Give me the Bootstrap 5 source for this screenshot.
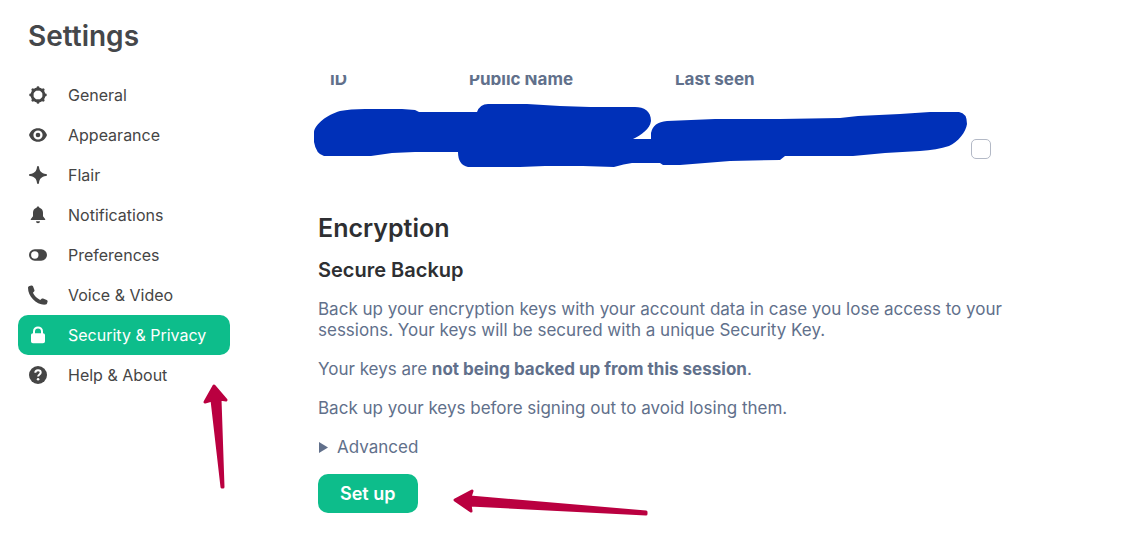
<!DOCTYPE html>
<html lang="en">
<head>
<meta charset="utf-8">
<meta name="viewport" content="width=device-width, initial-scale=1">
<title>Settings</title>
<link href="https://cdn.jsdelivr.net/npm/bootstrap@5.3.0/dist/css/bootstrap.min.css" rel="stylesheet">
<style>
body { font-family: Inter, "Liberation Sans", sans-serif; color: #61708b; font-size: 17px; line-height: 21px; background: #fff; }
h1 { font-size: 28px; line-height: 36px; font-weight: 600; color: #45474a; height: 75px; padding: 18px 0 0 10px; }
h2 { font-size: 25px; line-height: 32px; font-weight: 600; color: #2e2f32; margin: 5px 0 14px; }
h3 { font-size: 20px; line-height: 24px; font-weight: 600; color: #2e2f32; margin: 0 0 17px; }
.side { width: 230px; padding-left: 18px; }
.side .nav-link { height: 40px; padding: 0 10px; gap: 20px; border-radius: 10px; font-size: 16px; color: #454545; }
.side .nav-link.active { background: #0dbd8b; color: #fff; }
.side .ico { width: 20px; height: 20px; fill: currentColor; }
.pane { padding: 75px 20px 0 80px; }
.scroller { max-width: 748px; padding-left: 8px; }
.sessions { margin-top: -8px; width: 680px; table-layout: fixed; }
.sessions th { padding: 0 0 0 12px; font-size: 17px; font-weight: 700; height: 24px; }
.sessions td { height: 116px; padding: 0; }
.sessions .c-id { width: 139px; }
.sessions .c-name { width: 206px; }
.sessions .c-seen { width: 308px; }
.sessions .form-check-input { width: 20px; height: 20px; margin: 0; border: 1px solid #b3b9c6; border-radius: 5px; }
.redaction { left: -8px; top: 33px; width: 660px; height: 70px; fill: #0030b8; }
.arrow { fill: #ba0040; stroke: #ba0040; stroke-width: 3; stroke-linejoin: round; pointer-events: none; }
.arrow-up { left: 180px; top: 305px; width: 40px; height: 110px; }
.arrow-left { left: 132px; top: 10px; width: 200px; height: 34px; }
.copy p { margin-bottom: 18px; }
details { margin-bottom: 16px; }
summary { list-style: none; gap: 9px; }
summary svg { width: 10px; height: 12px; fill: #61708b; }
.btn-setup { background: #0dbd8b; color: #fff; font-size: 18px; font-weight: 600; line-height: 21px; padding: 9px 22px; border: 0; border-radius: 10px; }
.btn-setup:hover { background: #0ba87b; color: #fff; }
</style>
</head>
<body>
<div class="d-flex min-vh-100">
  <aside class="side flex-shrink-0">
    <h1 class="m-0">Settings</h1>
    <nav class="nav flex-column position-relative">
      <a class="nav-link d-flex align-items-center" href="#general"><svg class="ico" viewBox="0 0 20 20"><circle cx="10" cy="10" r="6" fill="none" stroke="currentColor" stroke-width="2.800"/><path d="M10 2.600V4M10 16v1.400M2.600 10H4M16 10h1.400M4.800 4.800l1 1M14.200 14.200l1 1M15.200 4.800l-1 1M5.800 14.200l-1 1" fill="none" stroke="currentColor" stroke-width="2.800" stroke-linecap="round"/></svg>General</a>
      <a class="nav-link d-flex align-items-center" href="#appearance"><svg class="ico" viewBox="0 0 20 20"><path fill-rule="evenodd" d="M10 3.200c4.300 0 7.500 2.700 9 6.800-1.500 4.100-4.700 6.800-9 6.800S2.500 14.100 1 10c1.500-4.100 4.700-6.800 9-6.800ZM10 5.400a4.600 4.600 0 1 0 0 9.200 4.600 4.600 0 0 0 0-9.200Z"/><circle cx="10" cy="10" r="2.300"/></svg>Appearance</a>
      <a class="nav-link d-flex align-items-center" href="#flair"><svg class="ico" viewBox="0 0 20 20"><path d="M10 1c.6 0 .9.400 1 1 .5 4.300 2.300 6.300 7 7 .7.100 1 .5 1 1s-.3.900-1 1c-4.700.7-6.500 2.700-7 7-.1.600-.4 1-1 1s-.9-.4-1-1c-.5-4.300-2.300-6.300-7-7-.7-.1-1-.5-1-1s.3-.9 1-1c4.700-.7 6.500-2.700 7-7 .1-.6.400-1 1-1Z"/></svg>Flair</a>
      <a class="nav-link d-flex align-items-center" href="#notifications"><svg class="ico" viewBox="0 0 20 20"><path d="M10 1.500c.8 0 1.300.5 1.400 1.300 2.300.6 3.600 2.400 3.600 5v3.500l2.100 2.600c.4.500.2 1.100-.5 1.100H3.400c-.7 0-.9-.6-.5-1.100L5 11.300V7.800c0-2.600 1.300-4.400 3.600-5 .1-.8.6-1.300 1.400-1.300ZM8 16.200h4a2 2 0 0 1-4 0Z"/></svg>Notifications</a>
      <a class="nav-link d-flex align-items-center" href="#preferences"><svg class="ico" viewBox="0 0 20 20"><path fill-rule="evenodd" d="M6.800 4.200h6.400a5.800 5.800 0 0 1 0 11.600H6.800a5.800 5.800 0 0 1 0-11.600Zm0 2.100a3.700 3.700 0 1 0 0 7.400 3.700 3.700 0 0 0 0-7.400Z"/></svg>Preferences</a>
      <a class="nav-link d-flex align-items-center" href="#voice"><svg class="ico" viewBox="0 0 20 20"><path d="M1.500.9 3.300.4c.8-.1 1.400.2 1.700.9l1.400 3.600c.2.600.1 1.100-.3 1.500L4.900 7.800c1.600 3.200 4 5.600 7.300 7.200l1.400-1.200c.4-.4.900-.5 1.500-.3l3.600 1.400c.7.300 1 .9.900 1.700l-.5 1.600c-.2.900-.9 1.400-1.800 1.400C8.400 20.200 0 11.500 0 2.800c0-1 .6-1.700 1.500-1.900Z"/></svg>Voice &amp; Video</a>
      <a class="nav-link active d-flex align-items-center" href="#security" aria-current="page"><svg class="ico" viewBox="0 0 20 20"><path fill-rule="evenodd" d="M5 8.200V6.400a5 5 0 0 1 10 0v1.800c1.200 0 2 .8 2 2v6c0 1.200-.8 2-2 2H5c-1.200 0-2-.8-2-2v-6c0-1.200.8-2 2-2Zm2 0h6V6.400a3 3 0 0 0-6 0Z"/></svg>Security &amp; Privacy</a>
      <a class="nav-link d-flex align-items-center" href="#help"><svg class="ico" viewBox="0 0 20 20"><circle cx="10" cy="10" r="9"/><path d="M7.300 7.800C7.300 6.200 8.400 5.300 10 5.300s2.700.9 2.700 2.300c0 1.900-2.600 1.900-2.600 4" fill="none" stroke="#fff" stroke-width="2"/><circle cx="10.100" cy="14.300" r="1.300" fill="#fff"/></svg>Help &amp; About</a>
      <svg class="arrow arrow-up position-absolute" viewBox="198 380 40 110" aria-hidden="true"><path d="M214 386 205 402 212 400 222 487H223L220 399 226 400Z"/></svg>
    </nav>
  </aside>

  <main class="pane flex-grow-1">
    <div class="scroller overflow-hidden">
      <div class="position-relative">
        <table class="sessions">
          <thead><tr><th class="c-id">ID</th><th class="c-name">Public Name</th><th class="c-seen">Last seen</th><th></th></tr></thead>
          <tbody><tr><td></td><td></td><td></td><td><input class="form-check-input d-block" type="checkbox" aria-label="Select session"></td></tr></tbody>
        </table>
        <svg class="redaction position-absolute" viewBox="310 100 660 70" aria-hidden="true"><path d="M314 132C315 124 327 115 340 111Q350 109 365 109H402L415 110 419 112H477Q480 104 488 104H527L560 106 590 107H635C644 107 651 111 651 121C650 129 641 135 633 139H651V133Q653 122 667 121L715 119H780L840 118 858 116 900 114 930 112H959Q967 113 967 124C966 132 958 142 949 146Q937 150 920 151L885 153 853 156H785L780 160 730 161 680 165H663L660 163H632Q624 164 614 167L583 166 545 166 520 167H468Q458 165 458 152H415L392 153 371 156H324Q316 154 314 142Z"/></svg>
      </div>
    </div>
    <section class="copy scroller">
      <h2>Encryption</h2>
      <h3>Secure Backup</h3>
      <p>Back up your encryption keys with your account data in case you lose access to your sessions. Your keys will be secured with a unique Security Key.</p>
      <p>Your keys are <b>not being backed up from this session</b>.</p>
      <p>Back up your keys before signing out to avoid losing them.</p>
      <details>
        <summary class="d-flex align-items-center"><svg viewBox="0 0 10 12" aria-hidden="true"><path d="M1 0 10 5.500 1 11Z"/></svg>Advanced</summary>
      </details>
      <div class="position-relative">
        <button class="btn btn-setup" type="button">Set up</button>
        <svg class="arrow arrow-left position-absolute" viewBox="450 484 200 34" aria-hidden="true"><path d="M455 500 472 491 470 497 646 512V514L470 505 471 511Z"/></svg>
      </div>
    </section>
  </main>
</div>
<script src="https://cdn.jsdelivr.net/npm/bootstrap@5.3.0/dist/js/bootstrap.bundle.min.js"></script>
</body>
</html>
